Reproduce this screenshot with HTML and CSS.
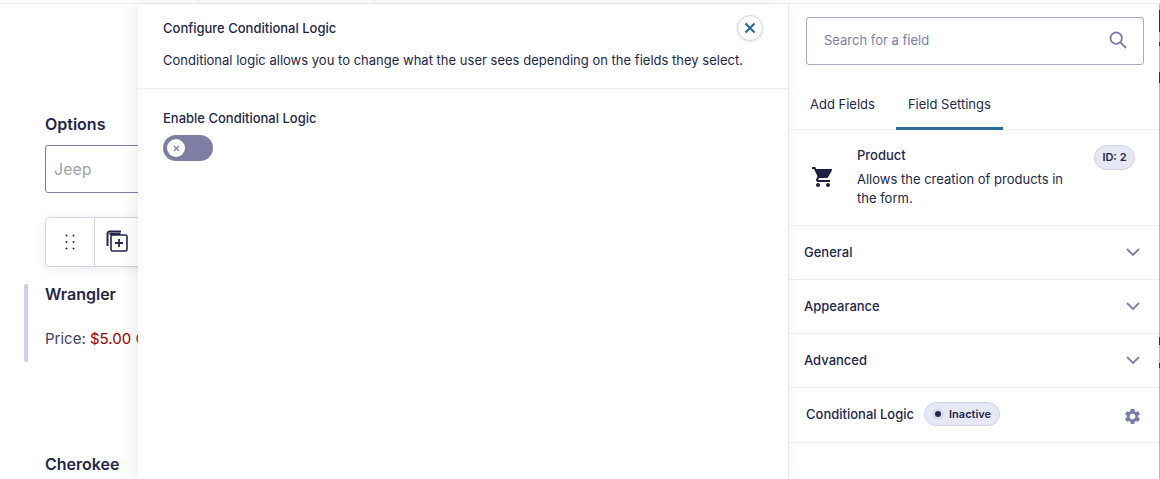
FILE: index.html
```html
<!DOCTYPE html>
<html lang="en">
<head>
<meta charset="utf-8">
<title>Form editor</title>
<link rel="stylesheet" href="styles.css">
</head>
<body>
<div class="topbar"><span class="top-a"></span></div>
<div class="main">
  <section class="canvas">
    <h3 class="label options-label">Options</h3>
    <div class="choice-input">Jeep</div>
    <div class="toolbar">
      <span class="tool tool-drag">
        <svg width="10" height="16" viewBox="0 0 10 16"><g fill="#242748"><circle cx="1.500" cy="1.500" r="1"/><circle cx="8.500" cy="1.500" r="1"/><circle cx="1.500" cy="8" r="1"/><circle cx="8.500" cy="8" r="1"/><circle cx="1.500" cy="14.500" r="1"/><circle cx="8.500" cy="14.500" r="1"/></g></svg>
      </span>
      <span class="tool tool-copy">
        <svg width="24" height="24" viewBox="0 0 24 24" fill="none" stroke="#242748" stroke-width="1.600"><path d="M2.500 17V4.500a2 2 0 0 1 2-2H16" stroke-width="2"/><path d="M4.500 5h11" stroke-width="2.500"/><rect x="6" y="6" width="16" height="16" rx="1.500" fill="#fff"/><path d="M14 10v8M10 14h8" stroke-width="1.800"/></svg>
      </span>
    </div>
    <div class="field-block">
      <h3 class="label wrangler">Wrangler</h3>
      <p class="price">Price: <span class="amount">$5.00</span> Quantity</p>
    </div>
    <h3 class="label cherokee">Cherokee</h3>
  </section>

  <section class="modal">
    <header class="modal-head">
      <div class="modal-text">
        <h2 class="modal-title">Configure Conditional Logic</h2>
        <p class="modal-desc">Conditional logic allows you to change what the user sees depending on the fields they select.</p>
      </div>
      <button class="close" type="button" aria-label="Close">
        <svg width="12" height="12" viewBox="0 0 12 12" fill="none" stroke="#2f6a94" stroke-width="2.200"><path d="M1.500 1.500l9 9M10.500 1.500l-9 9"/></svg>
      </button>
    </header>
    <div class="modal-body">
      <div class="enable-label">Enable Conditional Logic</div>
      <div class="toggle">
        <span class="knob"><svg width="7" height="7" viewBox="0 0 7 7" fill="none" stroke="#7e7ea5" stroke-width="1.200"><path d="M1 1l5 5M6 1l-5 5"/></svg></span>
      </div>
    </div>
  </section>

  <aside class="sidebar">
    <div class="search-wrap">
      <div class="search">
        <span class="search-ph">Search for a field</span>
        <svg class="search-icon" width="18" height="18" viewBox="0 0 18 18" fill="none" stroke="#7d7ea6" stroke-width="1.800"><circle cx="7.200" cy="7.200" r="5.700"/><path d="M11.500 11.500l5.500 5.500"/></svg>
      </div>
    </div>
    <nav class="tabs">
      <span class="tab">Add Fields</span>
      <span class="tab tab-active">Field Settings</span>
    </nav>
    <div class="field-info">
      <svg class="cart" width="24" height="24" viewBox="0 0 24 24" fill="#1f2142"><path d="M7 18c-1.100 0-1.990.9-1.990 2S5.900 22 7 22s2-.9 2-2-.9-2-2-2zM1 2v2h2l3.600 7.590-1.350 2.450c-.16.280-.25.610-.25.960 0 1.100.9 2 2 2h12v-2H7.420c-.14 0-.25-.11-.25-.25l.03-.12.900-1.630h7.450c.750 0 1.410-.41 1.750-1.030l3.580-6.490A1 1 0 0 0 20 4H5.210l-.94-2H1zm16 16c-1.100 0-1.990.9-1.990 2s.89 2 1.990 2 2-.9 2-2-.9-2-2-2z"/></svg>
      <div class="field-copy">
        <div class="field-name">Product</div>
        <p class="field-desc">Allows the creation of products in the form.</p>
      </div>
      <span class="id-badge">ID: 2</span>
    </div>
    <div class="acc-row"><span>General</span><svg class="chev" width="14" height="8" viewBox="0 0 14 8" fill="none" stroke="#7d7ea6" stroke-width="1.800"><path d="M1 1l6 6 6-6"/></svg></div>
    <div class="acc-row"><span>Appearance</span><svg class="chev" width="14" height="8" viewBox="0 0 14 8" fill="none" stroke="#7d7ea6" stroke-width="1.800"><path d="M1 1l6 6 6-6"/></svg></div>
    <div class="acc-row"><span>Advanced</span><svg class="chev" width="14" height="8" viewBox="0 0 14 8" fill="none" stroke="#7d7ea6" stroke-width="1.800"><path d="M1 1l6 6 6-6"/></svg></div>
    <div class="logic-row">
      <span class="logic-label">Conditional Logic</span>
      <span class="status"><span class="dot"></span>Inactive</span>
      <svg class="gear" width="19" height="19" viewBox="0 0 24 24" fill="#7d7ea6"><path d="M19.140 12.940c.04-.3.060-.61.060-.94 0-.32-.02-.64-.07-.94l2.030-1.580a.49.49 0 0 0 .12-.61l-1.920-3.320a.49.49 0 0 0-.59-.22l-2.390.96c-.5-.38-1.030-.7-1.620-.94l-.36-2.540a.48.48 0 0 0-.48-.41h-3.840c-.24 0-.43.170-.47.410l-.36 2.540c-.59.240-1.130.570-1.620.94l-2.390-.96a.49.49 0 0 0-.59.220L2.740 8.870c-.12.210-.08.470.12.610l2.030 1.580c-.05.300-.09.630-.09.940s.02.640.07.940l-2.030 1.580a.49.49 0 0 0-.12.610l1.920 3.320c.12.220.37.290.59.220l2.390-.96c.5.380 1.030.7 1.620.94l.36 2.540c.05.240.24.410.48.410h3.840c.24 0 .44-.17.470-.41l.36-2.540c.59-.24 1.130-.56 1.620-.94l2.390.96c.22.080.47 0 .59-.22l1.920-3.320c.12-.22.070-.47-.12-.61l-2.010-1.580zM12 15.600A3.610 3.610 0 0 1 8.400 12c0-1.980 1.620-3.600 3.600-3.600s3.600 1.620 3.600 3.600-1.620 3.600-3.600 3.600z"/></svg>
    </div>
  </aside>
</div>
</body>
</html>
```
FILE: styles.css
```css
* { box-sizing: border-box; }
html, body { margin: 0; padding: 0; height: 100%; }
body {
  width: 1160px;
  height: 479px;
  overflow: hidden;
  background: #fff;
  font-family: Inter, "Liberation Sans", sans-serif;
  color: #242748;
  display: flex;
  flex-direction: column;
}
h2, h3, p { margin: 0; }

.topbar {
  flex: 0 0 4px;
  display: flex;
  border-bottom: 1px solid #ecedf8;
}
.top-a { margin-left: 198px; width: 177px; height: 3px; border-left: 1px solid #ecedf8; border-right: 1px solid #ecedf8; }

.main {
  flex: 1;
  min-height: 0;
  display: grid;
  grid-template-columns: 138px 650px 372px;
}

.canvas {
  overflow: hidden;
  padding: 110px 0 0 45px;
  white-space: nowrap;
}
.label { font-size: 16px; line-height: 20px; font-weight: 600; color: #242748; }
.choice-input {
  margin-top: 11px;
  width: 200px;
  height: 48px;
  border: 1px solid #7e7ea5;
  border-radius: 3px;
  padding-left: 8px;
  font-size: 16px;
  line-height: 46px;
  color: #a3a3a8;
}
.toolbar {
  margin-top: 24px;
  width: 200px;
  height: 50px;
  display: flex;
  border: 1px solid #d3d4ea;
  border-radius: 4px;
  background: #fff;
  box-shadow: 0 2px 10px rgba(36, 39, 72, 0.1);
}
.tool { display: flex; align-items: center; justify-content: center; width: 50px; }
.tool-drag { width: 49px; border-right: 1px solid #d3d4ea; }
.tool-copy { width: 44px; padding-bottom: 2px; }
.field-block {
  margin: 18px 0 0 -21px;
  padding-left: 17px;
  height: 78px;
  border-left: 4px solid #ced0e8;
  border-radius: 2px;
}
.wrangler { margin-top: -1px; }
.price { margin-top: 25px; font-size: 15px; line-height: 20px; color: #3f4160; }
.amount { color: #900; }
.cherokee { margin-top: 92px; }

.modal {
  position: relative;
  background: #fff;
  box-shadow: -4px 0 14px rgba(36, 39, 72, 0.09);
}
.modal-head {
  height: 85px;
  padding: 14px 25px 0;
  display: flex;
  justify-content: space-between;
  border-bottom: 1px solid #ecedf8;
}
.modal-text { flex: 1; min-width: 0; }
.modal-title { font-size: 13px; line-height: 20px; font-weight: 500; color: #242748; }
.modal-desc { margin-top: 12px; font-size: 13px; line-height: 20px; color: #242748; white-space: nowrap; letter-spacing: 0.011px; }
.close {
  flex: none;
  width: 26px;
  height: 26px;
  padding: 0;
  border: 1px solid #d3d4ea;
  border-radius: 50%;
  background: #fff;
  box-shadow: 0 1px 3px rgba(36, 39, 72, 0.12);
  display: flex;
  align-items: center;
  justify-content: center;
  margin-top: -3px;
}
.modal-body { padding: 19px 25px 0; }
.enable-label { font-size: 13px; line-height: 20px; font-weight: 500; color: #242748; }
.toggle {
  margin-top: 7px;
  width: 50px;
  height: 26px;
  border-radius: 13px;
  background: #7e7ea5;
  padding: 4px;
}
.knob {
  width: 18px;
  height: 18px;
  border-radius: 50%;
  background: #fff;
  display: flex;
  align-items: center;
  justify-content: center;
}

.sidebar {
  border-left: 1px solid #ecedf8;
  padding-right: 1px;
  background: linear-gradient(to bottom,
    #b5b5bc 0 6px, #333 6px 28px, #b5b5bc 28px 38px, #333 38px 42px,
    #b5b5bc 42px 68px, #333 68px 79px, #b5b5bc 79px 333px, #333 333px 341px,
    #b5b5bc 341px 359px, #333 359px 364px, #b5b5bc 364px) right top / 1px 100% no-repeat;
}
.search-wrap { padding: 13px 15px 0 17px; }
.search {
  height: 48px;
  border: 1px solid #a9aacb;
  border-radius: 3px;
  padding: 0 16px 0 17px;
  display: flex;
  align-items: center;
  justify-content: space-between;
}
.search-ph { font-size: 13px; line-height: 16px; margin-top: -2px; color: #7d7ea6; }
.search-icon { margin-top: -2px; }
.tabs {
  margin-top: 12px;
  height: 53px;
  display: flex;
  padding-left: 9px;
  border-bottom: 1px solid #ecedf8;
}
.tab { padding: 0 12px; line-height: 54px; height: 53px; font-size: 13px; color: #242748; margin-right: 9px; }
.tab-active { border-bottom: 3px solid #2f6a94; }
.field-info {
  height: 96px;
  padding: 16px 24px 0 22px;
  display: flex;
  border-bottom: 1px solid #ecedf8;
}
.cart { margin-top: 19px; flex: none; }
.field-copy { width: 218px; margin-left: 22px; }
.field-name { font-size: 13px; line-height: 19px; font-weight: 500; }
.field-desc { margin-top: 5px; font-size: 13px; line-height: 19px; color: #242748; }
.id-badge {
  margin: -1px 0 0 auto;
  height: 25px;
  padding: 0 7.500px;
  border: 1px solid #d3d4ea;
  border-radius: 13px;
  background: #e7e8f5;
  font-size: 11px;
  font-weight: 600;
  line-height: 23px;
  white-space: nowrap;
}
.acc-row {
  height: 54px;
  padding: 0 19px 2px 15px;
  display: flex;
  align-items: center;
  justify-content: space-between;
  font-size: 13px;
  font-weight: 500;
  border-bottom: 1px solid #ecedf8;
}
.logic-row {
  height: 55px;
  padding: 0 17px 2px 17px;
  display: flex;
  align-items: center;
  font-size: 13px;
  font-weight: 500;
  border-bottom: 1px solid #ecedf8;
}
.status {
  margin-left: 10px;
  height: 24px;
  padding: 0 8px 0 7px;
  display: flex;
  align-items: center;
  border: 1px solid #d3d4ea;
  border-radius: 12px;
  background: #e7e8f5;
  font-size: 11px;
  font-weight: 600;
}
.dot {
  width: 6px;
  height: 6px;
  margin: 0 8px 0 3px;
  border-radius: 50%;
  background: #242748;
  box-shadow: 0 0 0 3px #d9daee;
}
.gear { margin-left: auto; margin-top: 4px; }
```
